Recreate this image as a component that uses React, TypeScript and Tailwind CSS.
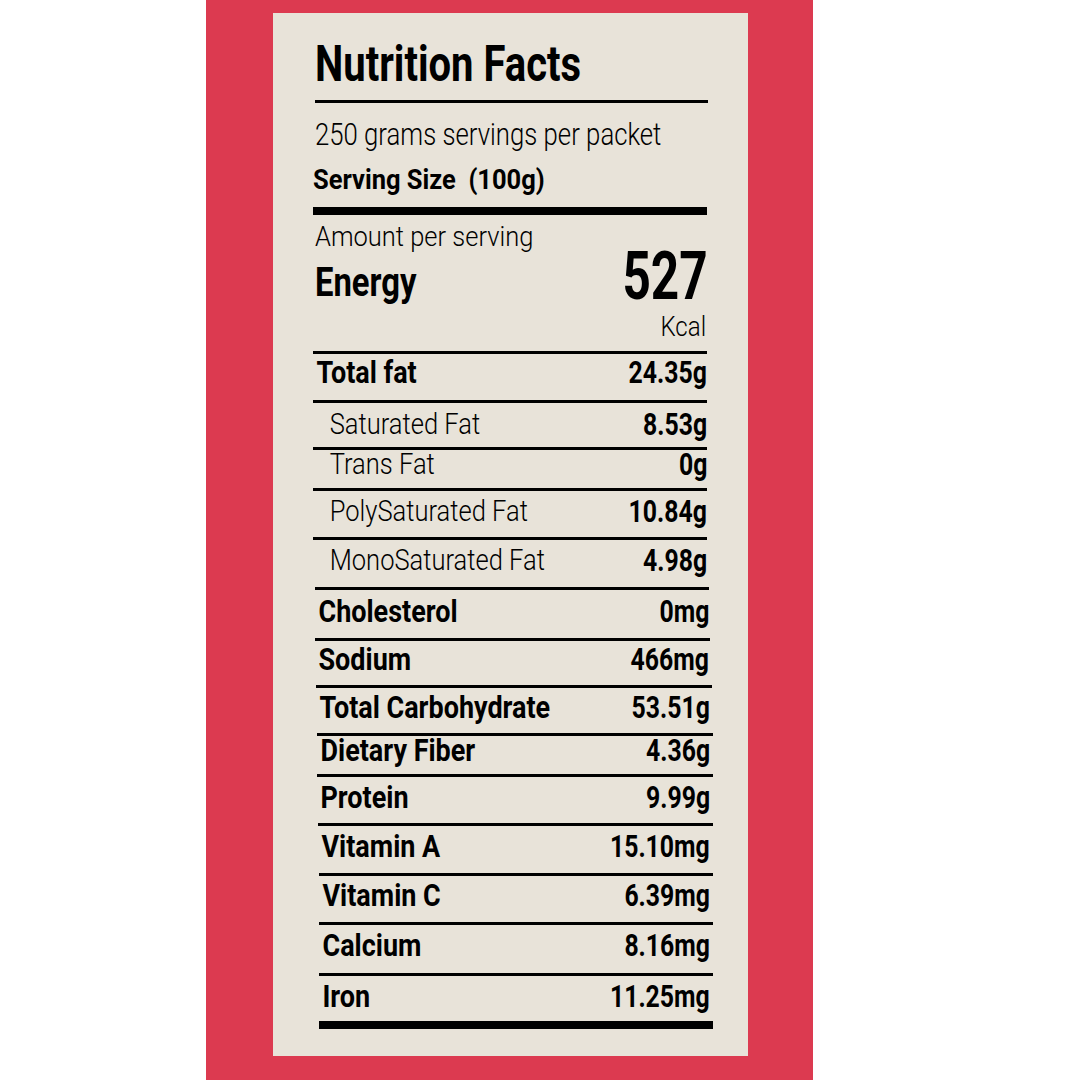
const font = { fontFamily: 'Roboto, "DejaVu Sans Condensed", "Liberation Sans", sans-serif' };

type Row = { label: string; value: string; sub?: boolean; cls: string };

// heights, padding and the slight drift of the printed label, row by row
const rows: Row[] = [
  { label: "Total fat", value: "24.35g", cls: "h-[49px] pb-[10px] ml-[-2px] mr-[1px]" },
  { label: "Saturated Fat", value: "8.53g", sub: true, cls: "h-[47px] pb-[2px] ml-[-2px] mr-[1px]" },
  { label: "Trans Fat", value: "0g", sub: true, cls: "h-[41px] pb-[10px] ml-[-2px] mr-[1px]" },
  { label: "PolySaturated Fat", value: "10.84g", sub: true, cls: "h-[49px] pb-[6px] ml-[-2px] mr-[1px]" },
  { label: "MonoSaturated Fat", value: "4.98g", sub: true, cls: "h-[50px] pb-[6px] ml-[-2px] mr-[1px]" },
  { label: "Cholesterol", value: "0mg", cls: "h-[51px] pb-[5px] ml-[0px] mr-[-1px]" },
  { label: "Sodium", value: "466mg", cls: "h-[47px] pb-[8px] ml-[0px] mr-[-2px] pr-[1px]" },
  { label: "Total Carbohydrate", value: "53.51g", cls: "h-[48px] pb-[6px] ml-[1px] mr-[-4px] pr-[2px]" },
  { label: "Dietary Fiber", value: "4.36g", cls: "h-[41px] pb-[10px] ml-[2px] mr-[-5px] pr-[3px]" },
  { label: "Protein", value: "9.99g", cls: "h-[49px] pb-[6px] ml-[2px] mr-[-5px] pr-[3px]" },
  { label: "Vitamin A", value: "15.10mg", cls: "h-[50px] pb-[6px] ml-[3px] mr-[-5px] pr-[3px]" },
  { label: "Vitamin C", value: "6.39mg", cls: "h-[49px] pb-[8px] ml-[4px] mr-[-5px] pr-[3px]" },
  { label: "Calcium", value: "8.16mg", cls: "h-[51px] pb-[8px] ml-[4px] mr-[-5px] pr-[3px]" },
  { label: "Iron", value: "11.25mg", cls: "h-[48px] pb-[4px] ml-[4px] mr-[-5px] pr-[3px]" },
];

export default function App() {
  return (
    <div className="flex h-[1080px] w-[1080px] bg-white text-black" style={font}>
      {/* red backdrop */}
      <div className="ml-[206px] h-full w-[607px] bg-[#dc3a50] pl-[67px] pt-[13px]">
        {/* label card */}
        <div className="flex h-[1043px] w-[475px] flex-col bg-[#e8e3d9] pl-[42px] pr-[40px] pt-[26px]">
          <h1 className="h-[50px] whitespace-nowrap text-[50px] font-bold leading-[50px]">
            <span className="inline-block origin-left scale-x-[0.8]">Nutrition Facts</span>
          </h1>
          <div className="mt-[11px] h-[3px] bg-black" />

          <p className="mt-[16px] whitespace-nowrap text-[31px] font-light leading-[31px]">
            <span className="inline-block origin-left scale-x-[0.83]">250 grams servings per packet</span>
          </p>
          <p className="mt-[16px] ml-[-2px] whitespace-nowrap text-[28px] font-bold leading-[28px]">
            <span className="inline-block origin-left scale-x-[0.91]">Serving Size&nbsp; (100g)</span>
          </p>
          <div className="mt-[13px] ml-[-2px] mr-[1px] h-[8px] bg-black" />

          <p className="mt-[8px] whitespace-nowrap text-[28px] font-light leading-[28px]">
            <span className="inline-block origin-left scale-x-[0.91]">Amount per serving</span>
          </p>
          <div className="flex items-start justify-between">
            <span className="mt-[11px] inline-block origin-left scale-x-[0.8] text-[41px] font-bold leading-[41px]">
              Energy
            </span>
            <span className="inline-block origin-right scale-x-[0.75] text-[66px] font-bold leading-[52px]">
              527
            </span>
          </div>
          <p className="mt-[10px] mr-[2px] text-right text-[28px] font-light leading-[28px]">
            <span className="inline-block origin-right scale-x-[0.86]">Kcal</span>
          </p>

          <div className="mt-[10px] flex flex-col">
            {rows.map((r) => (
              <div
                key={r.label}
                className={`flex items-center justify-between border-t-[3px] border-black ${r.cls}`}
              >
                <span className="flex min-w-0 flex-1 items-center whitespace-nowrap">
                  <span
                    className={
                      r.sub
                        ? "inline-block origin-left scale-x-[0.88] pl-[19px] text-[29px] font-light leading-none"
                        : "inline-block origin-left scale-x-[0.87] pl-[4px] text-[31px] font-bold leading-none"
                    }
                  >
                    {r.label}
                  </span>
                </span>
                <span className="inline-block shrink-0 origin-right scale-x-[0.8] whitespace-nowrap text-[31px] font-bold leading-none">
                  {r.value}
                </span>
              </div>
            ))}
          </div>
          <div className="ml-[4px] mr-[-5px] h-[8px] bg-black" />
        </div>
      </div>
    </div>
  );
}
